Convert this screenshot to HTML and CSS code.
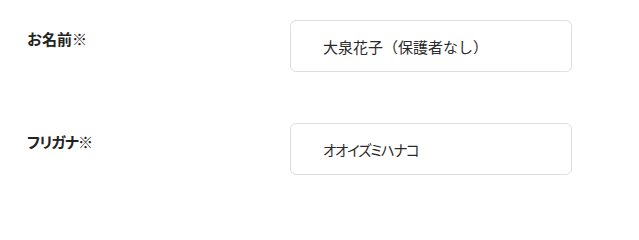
FILE: index.html
```html
<!DOCTYPE html>
<html lang="ja">
<head>
<meta charset="utf-8">
<title>フォーム</title>
<link rel="stylesheet" href="styles.css">
</head>
<body>
<form class="form">
  <div class="row">
    <label class="label" for="name">お名前※</label>
    <input class="field" id="name" type="text" value="大泉花子（保護者なし）" readonly>
  </div>
  <div class="row">
    <label class="label label-kana" for="kana">フリガナ※</label>
    <input class="field field-kana" id="kana" type="text" value="オオイズミハナコ" readonly>
  </div>
</form>
</body>
</html>
```
FILE: styles.css
```css
html, body {
  margin: 0;
  padding: 0;
  background: #fff;
}
body {
  font-family: "Noto Sans CJK JP", "Noto Sans", sans-serif;
  color: #222;
}
.form {
  display: flex;
  flex-direction: column;
  gap: 51px;
  padding: 20px 0 0 27px;
}
.row {
  display: grid;
  grid-template-columns: 263px 282px;
  align-items: start;
}
.label {
  font-size: 15px;
  font-weight: 700;
  line-height: 22px;
  padding-top: 8px;
  color: #222;
}
.label-kana {
  font-feature-settings: "palt";
  letter-spacing: -0.8px;
}
.field {
  box-sizing: border-box;
  width: 282px;
  height: 52px;
  margin: 0;
  padding: 0 0 0 32px;
  border: 1px solid #dedede;
  border-radius: 6px;
  background: #fff;
  font-family: "Noto Sans CJK JP", "Noto Sans", sans-serif;
  font-size: 15px;
  color: #2a2a2a;
  outline: none;
}
.field-kana {
  font-size: 14.5px;
  font-feature-settings: "palt";
  letter-spacing: -1.3px;
}
```
